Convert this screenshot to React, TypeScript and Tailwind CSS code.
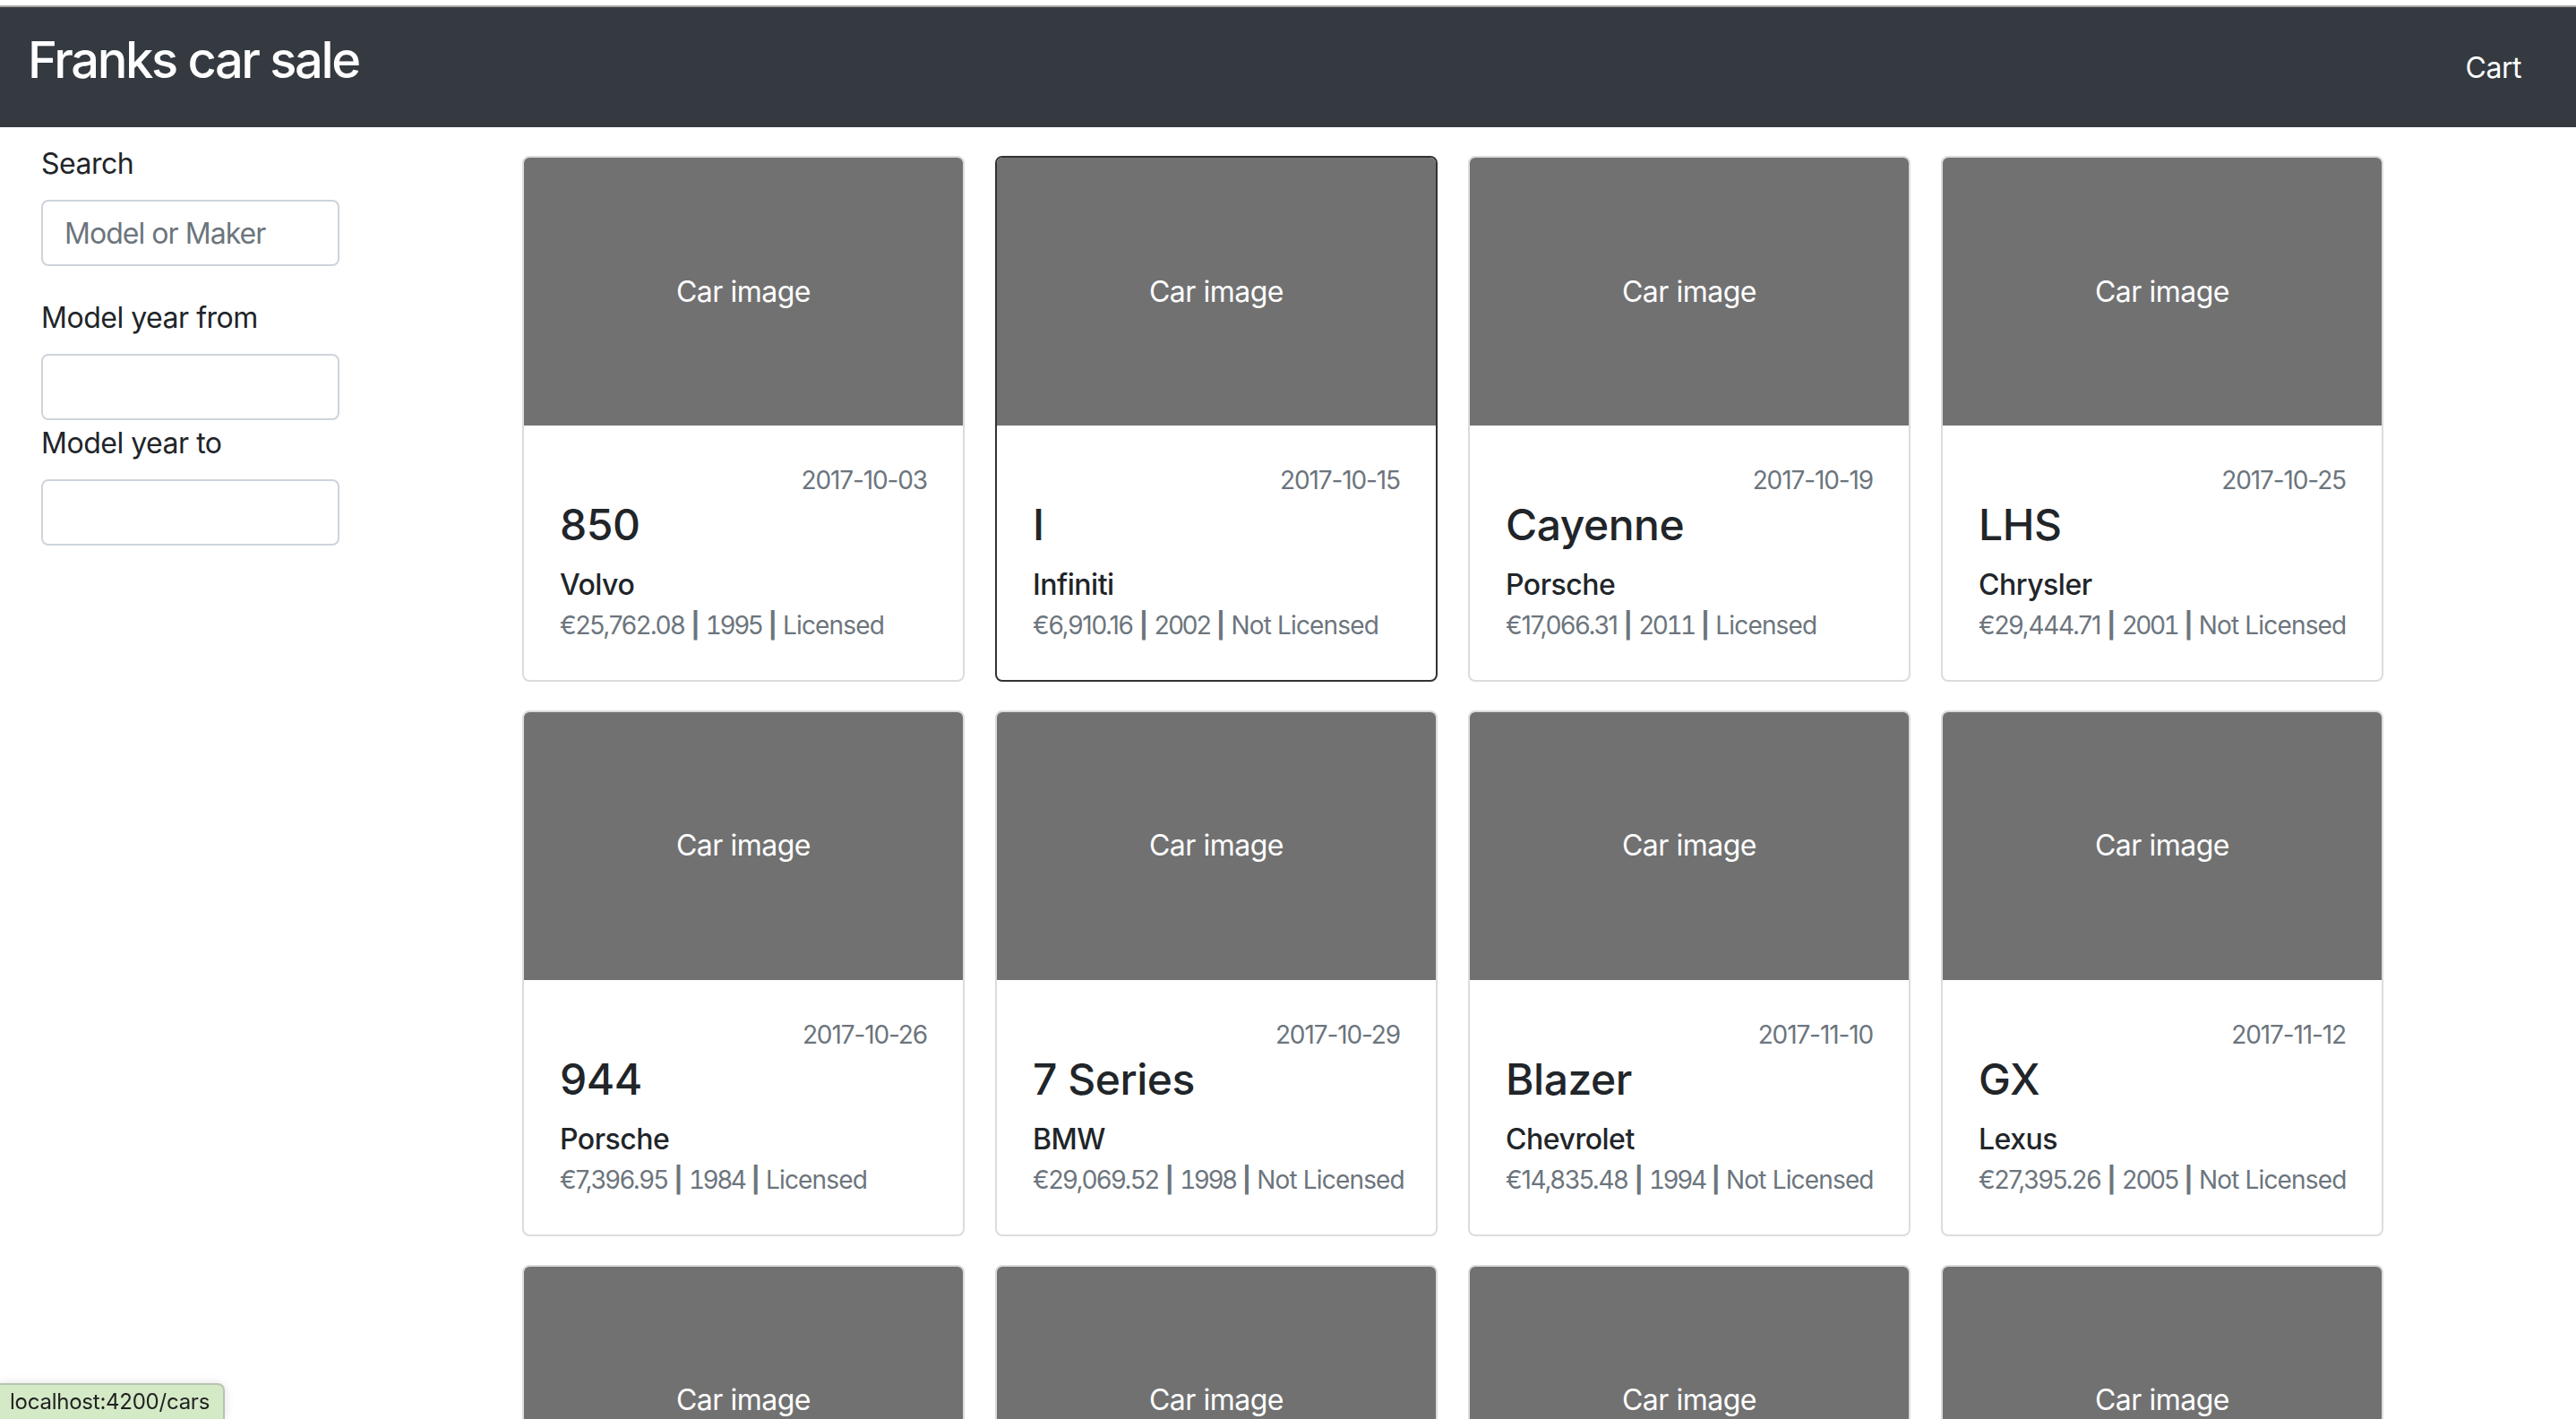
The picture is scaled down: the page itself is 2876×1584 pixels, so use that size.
import React from 'react';

interface Car {
  model: string;
  maker: string;
  price: string;
  year: number;
  licensed: boolean;
  date: string;
}

const cars: Car[] = [
  { model: '850', maker: 'Volvo', price: '€25,762.08', year: 1995, licensed: true, date: '2017-10-03' },
  { model: 'I', maker: 'Infiniti', price: '€6,910.16', year: 2002, licensed: false, date: '2017-10-15' },
  { model: 'Cayenne', maker: 'Porsche', price: '€17,066.31', year: 2011, licensed: true, date: '2017-10-19' },
  { model: 'LHS', maker: 'Chrysler', price: '€29,444.71', year: 2001, licensed: false, date: '2017-10-25' },
  { model: '944', maker: 'Porsche', price: '€7,396.95', year: 1984, licensed: true, date: '2017-10-26' },
  { model: '7 Series', maker: 'BMW', price: '€29,069.52', year: 1998, licensed: false, date: '2017-10-29' },
  { model: 'Blazer', maker: 'Chevrolet', price: '€14,835.48', year: 1994, licensed: false, date: '2017-11-10' },
  { model: 'GX', maker: 'Lexus', price: '€27,395.26', year: 2005, licensed: false, date: '2017-11-12' },
  { model: 'Accord', maker: 'Honda', price: '€12,480.10', year: 1999, licensed: true, date: '2017-11-15' },
  { model: 'Golf', maker: 'Volkswagen', price: '€9,212.44', year: 2004, licensed: true, date: '2017-11-18' },
  { model: 'Tahoe', maker: 'Chevrolet', price: '€21,930.77', year: 2008, licensed: false, date: '2017-11-21' },
  { model: 'Civic', maker: 'Honda', price: '€8,105.62', year: 1997, licensed: true, date: '2017-11-24' },
];

const CarCard: React.FC<{ car: Car; active?: boolean }> = ({ car, active }) => (
  <div
    className={`flex flex-col rounded-[8px] border-2 bg-white overflow-hidden ${
      active ? 'border-[#333333]' : 'border-[#dcdcdc]'
    }`}
  >
    <div className="h-[299px] bg-[#717171] flex items-center justify-center text-white text-[32px] leading-[48px]">
      Car image
    </div>
    <div className="px-[40px] pt-[40px] pb-[40px]">
      <div className="text-right text-[28px] leading-[42px] tracking-[-0.04em] text-[#6c757d]">{car.date}</div>
      <h4 className="text-[48px] leading-[1.2] font-medium text-[#212529] mb-[19px]">{car.model}</h4>
      <h6 className="text-[32px] leading-[1.2] font-medium text-[#212529] mb-[5px]">{car.maker}</h6>
      <div className="whitespace-nowrap text-[28px] leading-[42px] tracking-[-0.03em] text-[#6c757d]">
        <span className="tracking-[-0.045em]">{car.price}</span>
        <b className="mx-[7px]">|</b>
        <span className="tabular-nums tracking-[-0.09em]">{car.year}</span>
        <b className="mx-[7px]">|</b>
        {car.licensed ? 'Licensed' : 'Not Licensed'}
      </div>
    </div>
  </div>
);

const Field: React.FC<{ label: string; placeholder?: string; className?: string }> = ({
  label,
  placeholder,
  className,
}) => (
  <div className={className}>
    <label className="block text-[32px] leading-[48px] mb-[16px] text-[#212529]">{label}</label>
    <input
      placeholder={placeholder}
      className="block w-full h-[74px] rounded-[8px] border-2 border-[#ced4da] px-[24px] text-[32px] tracking-[-0.03em] text-[#495057] placeholder:text-[#6c757d] outline-none"
    />
  </div>
);

export default function App() {
  return (
    <div className="min-h-screen bg-white font-['Inter','Noto_Sans',sans-serif] tracking-[-0.03em] text-[#212529]">
      <div className="h-[6px] bg-white" />
      <div className="h-[2px] bg-[#a6a6a6]" />
      <nav className="h-[134px] bg-[#343a40] flex items-baseline justify-between pt-[26px] pl-[31px] pr-[61px]">
        <span className="text-white text-[56px] leading-[1.2] font-medium tracking-[-0.042em]">Franks car sale</span>
        <span className="text-white text-[32px] leading-[1.5]">Cart</span>
      </nav>

      <div className="flex pl-[46px]">
        <aside className="w-[333px] pt-[17px] shrink-0">
          <Field label="Search" placeholder="Model or Maker" className="mb-[34px]" />
          <Field label="Model year from" className="mb-[2px]" />
          <Field label="Model year to" />
        </aside>

        <main className="ml-[204px] pt-[32px] pb-[40px]">
          <div className="grid grid-cols-[repeat(4,494px)] gap-x-[34px] gap-y-[32px]">
            {cars.map((car, i) => (
              <CarCard key={i} car={car} active={i === 1} />
            ))}
          </div>
        </main>
      </div>

      <div className="fixed bottom-0 left-0 w-[251px] h-[40px] bg-[#d4eac7] border-t-2 border-r-2 border-[#b8c4b2] rounded-tr-[8px] shadow-[0_0_12px_rgba(0,0,0,0.12)] pl-[11px] flex items-center text-[24px] tracking-[-0.01em] text-[#222222]">
        localhost:4200/cars
      </div>
    </div>
  );
}
